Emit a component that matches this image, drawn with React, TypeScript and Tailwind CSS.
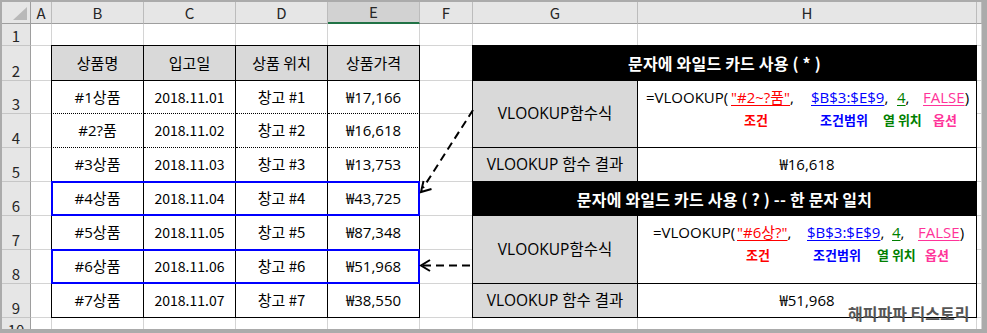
import React from "react";
import clsx from "clsx";

const COL_START = ["", "col-start-1", "col-start-2", "col-start-3", "col-start-4", "col-start-5", "col-start-6", "col-start-7", "col-start-8", "col-start-9", "col-start-10"];
const ROW_START = ["", "row-start-1", "row-start-2", "row-start-3", "row-start-4", "row-start-5", "row-start-6", "row-start-7", "row-start-8", "row-start-9", "row-start-10", "row-start-11"];

const LETTERS = ["A", "B", "C", "D", "E", "F", "G", "H", ""];

const HEADERS = ["상품명", "입고일", "상품 위치", "상품가격"];

const PRODUCTS = [
  ["#1상품", "2018.11.01", "창고 #1", "₩17,166"],
  ["#2?품", "2018.11.02", "창고 #2", "₩16,618"],
  ["#3상품", "2018.11.03", "창고 #3", "₩13,753"],
  ["#4상품", "2018.11.04", "창고 #4", "₩43,725"],
  ["#5상품", "2018.11.05", "창고 #5", "₩87,348"],
  ["#6상품", "2018.11.06", "창고 #6", "₩51,968"],
  ["#7상품", "2018.11.07", "창고 #7", "₩38,550"],
];

const LATIN = "font-['Open_Sans','Noto_Sans_CJK_KR',sans-serif]";

// grid column / row are 1-based; sheet row n sits on grid row n + 1
function Cell({ c, r, className, children }: { c: number; r: number; className?: string; children?: React.ReactNode }) {
  return <div className={clsx(COL_START[c], ROW_START[r], className)}>{children}</div>;
}

function Formula({
  pad,
  w,
  cond,
  labelPad,
  lw,
}: {
  pad: string;
  w: [string, string, string, string];
  cond: string;
  labelPad: string;
  lw: [string, string, string];
}) {
  return (
    <div className="flex flex-col pt-[6px] whitespace-nowrap">
      <div className={clsx("flex text-[15px] leading-[20px]", LATIN, pad)}>
        <span className={clsx("shrink-0", w[0])}>=VLOOKUP(</span>
        <span className={clsx("shrink-0", w[1])}>
          <span className="text-[#ff0000] underline underline-offset-2">{cond}</span>,
        </span>
        <span className={clsx("shrink-0", w[2])}>
          <span className="text-[#0000ff] underline underline-offset-2">$B$3:$E$9</span>,
        </span>
        <span className={clsx("shrink-0", w[3])}>
          <span className="text-[#008000] underline underline-offset-2">4</span>,
        </span>
        <span className="shrink-0">
          <span className="text-[#ff3399] underline underline-offset-2">FALSE</span>)
        </span>
      </div>
      <div className={clsx("flex text-[13px] font-bold leading-[18px] mt-[4px]", labelPad)}>
        <span className={clsx("shrink-0 text-[#ff0000]", lw[0])}>조건</span>
        <span className={clsx("shrink-0 text-[#0000ff]", lw[1])}>조건범위</span>
        <span className={clsx("shrink-0 text-[#008000]", lw[2])}>열 위치</span>
        <span className="shrink-0 text-[#ff3399]">옵션</span>
      </div>
    </div>
  );
}

export default function App() {
  const bg: React.ReactNode[] = [];

  // sheet chrome: corner, column letters, row numbers, empty gridded cells
  for (let r = 1; r <= 11; r++) {
    for (let c = 1; c <= 10; c++) {
      const key = `${r}-${c}`;
      if (r === 1 && c === 1) {
        bg.push(
          <Cell key={key} c={c} r={r} className="relative bg-[#e6e6e6] border-r border-b border-[#9e9e9e]">
            <svg className="absolute left-[11px] top-[5px]" width="15" height="14">
              <polygon points="14,0 14,13 0,13" fill="#b9b9b9" />
            </svg>
          </Cell>
        );
      } else if (r === 1) {
        const sel = c === 6;
        bg.push(
          <Cell
            key={key}
            c={c}
            r={r}
            className={clsx(
              "flex items-center justify-center text-[15px] leading-[18px] text-[#262626] border-r",
              sel ? "bg-[#d2d2d2] border-b-2 border-b-[#217346] border-r-[#bcbcbc]" : "bg-[#e6e6e6] border-b border-b-[#9e9e9e] border-r-[#bcbcbc]",
              c === 9 && "border-r-[#9e9e9e]"
            )}
          >
            {LETTERS[c - 2]}
          </Cell>
        );
      } else if (c === 1) {
        bg.push(
          <Cell
            key={key}
            c={c}
            r={r}
            className="flex items-end justify-center overflow-hidden bg-[#e6e6e6] border-r border-r-[#9e9e9e] border-b border-b-[#c6c6c6] text-[15px] leading-[18px] text-[#262626]"
          >
            {r - 1}
          </Cell>
        );
      } else {
        bg.push(<Cell key={key} c={c} r={r} className="bg-white border-r border-b border-[#d4d4d4]" />);
      }
    }
  }

  // product table, B2:E9
  const table: React.ReactNode[] = [];
  HEADERS.forEach((h, j) => {
    table.push(
      <Cell
        key={`h-${j}`}
        c={j + 3}
        r={3}
        className={clsx(
          "flex items-center justify-center text-[15px] bg-[#d9d9d9] border-black border-r border-b -mt-px border-t",
          j === 0 && "-ml-px border-l"
        )}
      >
        {h}
      </Cell>
    );
  });
  PRODUCTS.forEach((row, i) => {
    const sheetRow = i + 3;
    row.forEach((v, j) => {
      table.push(
        <Cell
          key={`p-${i}-${j}`}
          c={j + 3}
          r={sheetRow + 1}
          className={clsx(
            "flex items-center justify-center bg-white border-black border-r border-b",
            j === 1 ? "text-[14px]" : clsx("text-[15px]", j !== 2 && LATIN),
            j === 0 && "-ml-px border-l",
            (sheetRow === 3 || sheetRow === 4) && "[border-bottom-style:dotted]!"
          )}
        >
          {v}
        </Cell>
      );
    });
  });

  const label = clsx("flex items-center justify-center text-[15.5px] bg-[#d9d9d9] border-l border-r border-b border-black -ml-px", LATIN);
  const banner = "flex items-center justify-center bg-black text-white font-bold text-[16px] tracking-[0.2px] -ml-px col-span-2";

  return (
    <div className="relative w-[987px] h-[333px] bg-white font-['Noto_Sans_CJK_KR',sans-serif] text-[14px] text-black">
      <div className="w-[987px] h-[333px] overflow-hidden border-t-2 border-l-2 border-r-[5px] border-b-[4px] border-[#ababab]">
        <div className="grid grid-cols-[29px_21px_92px_92px_92px_92px_53px_165px_339px_5px] grid-rows-[22px_22px_35px_33px_34px_34px_34px_34px_34px_34px_22px]">
          {bg}
          {table}

          {/* wildcard * block */}
          <Cell c={8} r={3} className={clsx(banner, "-mt-px")}>
            문자에 와일드 카드 사용 ( * )
          </Cell>
          <Cell c={8} r={4} className={clsx(label, "row-span-2")}>
            VLOOKUP함수식
          </Cell>
          <Cell c={9} r={4} className="row-span-2 bg-white border-r border-b border-black">
            <Formula
              pad="pl-[8px]"
              w={["w-[85px]", "w-[80px]", "w-[86px]", "w-[26px]"]}
              cond={'"#2~?품"'}
              labelPad="pl-[106px]"
              lw={["w-[76px]", "w-[63px]", "w-[50px]"]}
            />
          </Cell>
          <Cell c={8} r={6} className={label}>
            VLOOKUP 함수 결과
          </Cell>
          <Cell c={9} r={6} className={clsx("flex items-center justify-center text-[15px] bg-white border-r border-b border-black", LATIN)}>
            ₩16,618
          </Cell>

          {/* wildcard ? block */}
          <Cell c={8} r={7} className={clsx(banner, "border-l border-r border-b border-black")}>
            문자에 와일드 카드 사용 ( ? ) -- 한 문자 일치
          </Cell>
          <Cell c={8} r={8} className={clsx(label, "row-span-2")}>
            VLOOKUP함수식
          </Cell>
          <Cell c={9} r={8} className="row-span-2 bg-white border-r border-b border-black">
            <Formula
              pad="pl-[15px]"
              w={["w-[84px]", "w-[70px]", "w-[85px]", "w-[26px]"]}
              cond={'"#6상?"'}
              labelPad="pl-[108px]"
              lw={["w-[67px]", "w-[64px]", "w-[48px]"]}
            />
          </Cell>
          <Cell c={8} r={10} className={label}>
            VLOOKUP 함수 결과
          </Cell>
          <Cell c={9} r={10} className={clsx("flex items-center justify-center text-[15px] bg-white border-r border-b border-black", LATIN)}>
            ₩51,968
          </Cell>

          {/* matched rows */}
          <Cell c={3} r={7} className="col-span-4 -ml-px -mt-px border-2 border-[#0000ff]" />
          <Cell c={3} r={9} className="col-span-4 -ml-px -mt-px border-2 border-[#0000ff]" />
        </div>
      </div>

      {/* lookup arrows */}
      <svg className="pointer-events-none absolute left-0 top-0" width="987" height="333">
        <line x1="473" y1="110" x2="423" y2="188" stroke="black" strokeWidth="2" strokeDasharray="8 5" />
        <polyline points="423.5,181 421,192 431.5,189" fill="none" stroke="black" strokeWidth="2" />
        <line x1="470" y1="265.5" x2="423" y2="265.5" stroke="black" strokeWidth="2" strokeDasharray="8 5" />
        <polyline points="430,260 421,265.5 430,271" fill="none" stroke="black" strokeWidth="2" />
      </svg>

      <div className="pointer-events-none absolute left-[848px] top-[302px] text-[16px] leading-[22px] font-bold text-[#555555] whitespace-nowrap">
        해피파파 티스토리
      </div>
    </div>
  );
}
